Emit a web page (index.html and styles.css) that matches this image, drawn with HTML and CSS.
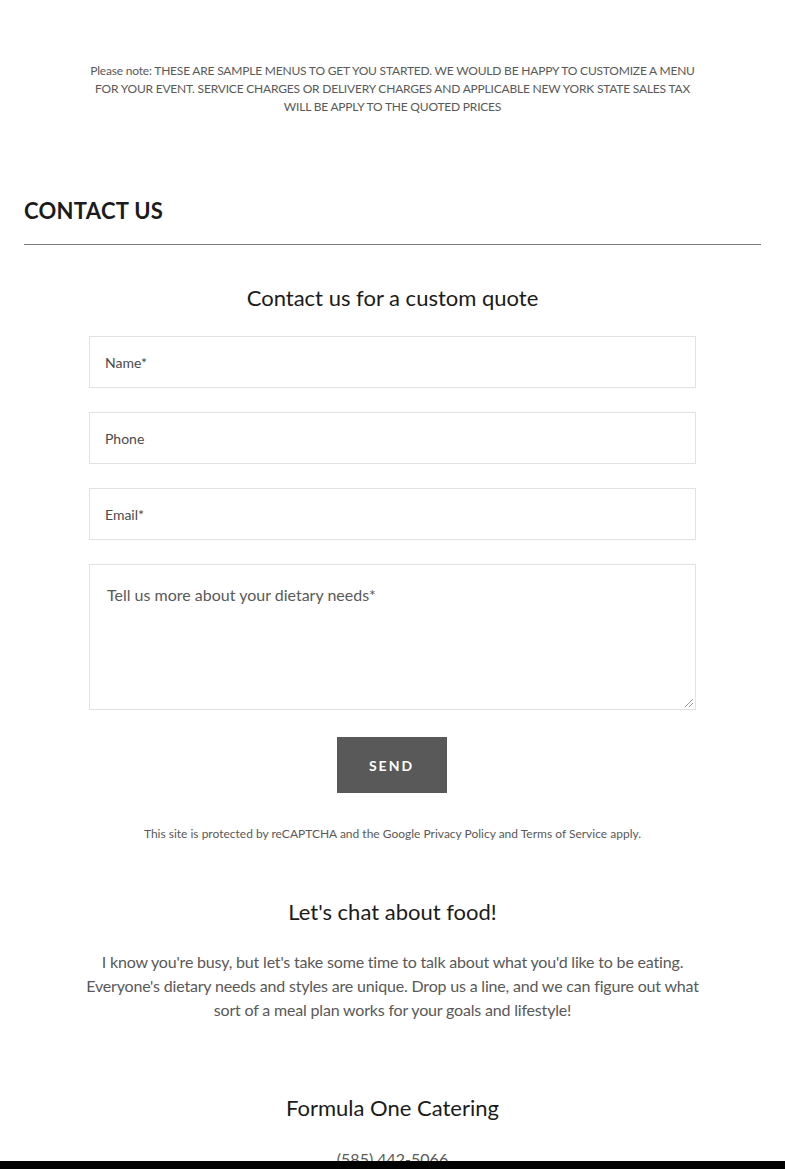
FILE: index.html
```html
<!DOCTYPE html>
<html lang="en">
<head>
<meta charset="utf-8">
<title>Contact Us</title>
<link rel="stylesheet" href="styles.css">
</head>
<body>
<main class="page">
  <p class="note">Please note: THESE ARE SAMPLE MENUS TO GET YOU STARTED. WE WOULD BE HAPPY TO CUSTOMIZE A MENU FOR YOUR EVENT. SERVICE CHARGES OR DELIVERY CHARGES AND APPLICABLE NEW YORK STATE SALES TAX WILL BE APPLY TO THE QUOTED PRICES</p>

  <section class="contact">
    <h2 class="section-title">CONTACT US</h2>
    <hr class="rule">
    <h3 class="form-title">Contact us for a custom quote</h3>
    <form class="form">
      <div class="field"><span class="label">Name*</span></div>
      <div class="field"><span class="label">Phone</span></div>
      <div class="field"><span class="label">Email*</span></div>
      <div class="field area"><span class="area-label">Tell us more about your dietary needs*</span><span class="grip"></span></div>
      <div class="actions"><button type="button" class="send">SEND</button></div>
    </form>
    <p class="captcha">This site is protected by reCAPTCHA and the Google Privacy Policy and Terms of Service apply.</p>

    <h3 class="chat-title">Let's chat about food!</h3>
    <p class="chat-text">I know you're busy, but let's take some time to talk about what you'd like to be eating.<br>Everyone's dietary needs and styles are unique. Drop us a line, and we can figure out what<br>sort of a meal plan works for your goals and lifestyle!</p>

    <h3 class="biz-title">Formula One Catering</h3>
    <p class="phone">(585) 442-5066</p>
  </section>
</main>
<div class="bottom-bar"></div>
</body>
</html>
```

FILE: styles.css
```css
html, body {
  margin: 0;
  padding: 0;
  background: #fff;
}
body {
  font-family: Lato, "Open Sans", Arial, sans-serif;
  color: #595959;
}
.page {
  padding: 0 24px;
}
.note {
  margin: 0 auto;
  padding-top: 62px;
  width: 610px;
  font-size: 12px;
  line-height: 18px;
  text-align: center;
  color: #595959;
  letter-spacing: -0.2px;
}
.contact {
  display: flex;
  flex-direction: column;
  align-items: center;
}
.section-title {
  align-self: stretch;
  margin: 81px 0 0;
  font-family: Lato, sans-serif;
  font-weight: 700;
  font-size: 22px;
  line-height: 28px;
  letter-spacing: 0.3px;
  color: #1b1b1b;
}
.rule {
  align-self: stretch;
  margin: 19px 0 0;
  border: 0;
  border-top: 1px solid #7a7a7a;
  height: 0;
}
.form-title {
  margin: 39px 0 0;
  font-weight: 400;
  font-size: 22px;
  line-height: 28px;
  color: #1b1b1b;
}
.form {
  margin-top: 24px;
  width: 607px;
  display: flex;
  flex-direction: column;
  gap: 24px;
}
.field {
  box-sizing: border-box;
  height: 52px;
  border: 1px solid #e2e2e2;
  display: flex;
  align-items: center;
  padding: 0 15px;
}
.label {
  font-size: 14px;
  color: #4a4a4a;
}
.field.area {
  position: relative;
  height: 146px;
  align-items: flex-start;
  padding: 18px 17px;
}
.area-label {
  font-size: 16px;
  line-height: 24px;
  color: #595959;
}
.grip {
  position: absolute;
  right: 2px;
  bottom: 2px;
  width: 8px;
  height: 8px;
  background: linear-gradient(135deg, transparent 45%, #999 45%, #999 52%, transparent 52%, transparent 70%, #999 70%, #999 77%, transparent 77%);
}
.actions {
  display: flex;
  justify-content: center;
  margin-top: 3px;
}
.send {
  width: 110px;
  height: 56px;
  margin-left: -2px;
  border: 0;
  background: #595959;
  color: #fff;
  font-family: Lato, sans-serif;
  font-weight: 700;
  font-size: 14px;
  letter-spacing: 2px;
  cursor: pointer;
}
.captcha {
  margin: 32px 0 0;
  font-size: 12px;
  line-height: 18px;
  color: #595959;
}
.chat-title {
  margin: 55px 0 0;
  font-weight: 400;
  font-size: 22px;
  line-height: 28px;
  color: #1b1b1b;
}
.chat-text {
  margin: 24px 0 0;
  width: 660px;
  font-size: 16px;
  line-height: 24px;
  text-align: center;
  color: #595959;
  letter-spacing: -0.18px;
}
.biz-title {
  margin: 72px 0 0;
  font-weight: 400;
  font-size: 22px;
  line-height: 28px;
  color: #1b1b1b;
}
.phone {
  margin: 25px 0 0;
  font-size: 16px;
  line-height: 24px;
  color: #595959;
}
.bottom-bar {
  position: fixed;
  left: 0;
  right: 0;
  bottom: 0;
  height: 8px;
  background: #000;
}
```
